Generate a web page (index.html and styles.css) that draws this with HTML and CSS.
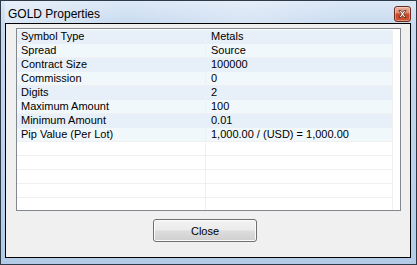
FILE: index.html
```html
<!DOCTYPE html>
<html>
<head>
<meta charset="utf-8">
<link rel="stylesheet" href="styles.css">
</head>
<body>
<div class="window">
  <div class="titlebar">
    <span class="title">GOLD Properties</span>
    <button class="xbtn" aria-label="Close">
      <svg width="9" height="8" viewBox="0 0 9 8">
        <path d="M1 0.5 L3 0.5 L4.5 2.5 L6 0.5 L8 0.5 L5.6 4 L8 7.5 L6 7.5 L4.5 5.5 L3 7.5 L1 7.5 L3.4 4 Z" fill="#fff" stroke="#5a2418" stroke-width="0.8" stroke-linejoin="round"/>
      </svg>
    </button>
  </div>
  <div class="client">
    <div class="list">
      <div class="row alt"><div class="c1">Symbol Type</div><div class="c2">Metals</div></div>
      <div class="row"><div class="c1">Spread</div><div class="c2">Source</div></div>
      <div class="row alt"><div class="c1">Contract Size</div><div class="c2">100000</div></div>
      <div class="row"><div class="c1">Commission</div><div class="c2">0</div></div>
      <div class="row alt"><div class="c1">Digits</div><div class="c2">2</div></div>
      <div class="row"><div class="c1">Maximum Amount</div><div class="c2">100</div></div>
      <div class="row alt"><div class="c1">Minimum Amount</div><div class="c2">0.01</div></div>
      <div class="row"><div class="c1">Pip Value (Per Lot)</div><div class="c2">1,000.00 / (USD) = 1,000.00</div></div>
      <div class="row empty"><div class="c1"></div><div class="c2"></div></div>
      <div class="row empty"><div class="c1"></div><div class="c2"></div></div>
      <div class="row empty"><div class="c1"></div><div class="c2"></div></div>
      <div class="row empty"><div class="c1"></div><div class="c2"></div></div>
      <div class="row empty"><div class="c1"></div><div class="c2"></div></div>
    </div>
    <div class="actions">
      <button class="btn">Close</button>
    </div>
  </div>
</div>
</body>
</html>
```
FILE: styles.css
```css
html, body {
  margin: 0;
  padding: 0;
  background: #ffffff;
}

.window {
  box-sizing: border-box;
  width: 417px;
  height: 265px;
  border: 1px solid #2f3a48;
  background: linear-gradient(180deg, #dce8f6 0%, #c6d9ef 10%, #bcd2ec 60%, #b3cbe7 100%);
  padding: 0 5px 6px 4px;
  display: flex;
  flex-direction: column;
}

.titlebar {
  height: 22px;
  display: flex;
  align-items: flex-start;
  justify-content: space-between;
  background: linear-gradient(90deg, rgba(255,255,255,0.35) 0%, rgba(255,255,255,0) 30%, rgba(255,255,255,0.25) 60%, rgba(255,255,255,0) 85%);
}

.title {
  font-family: "Liberation Sans", Arial, sans-serif;
  font-size: 12px;
  color: #000;
  padding: 7px 0 0 3px;
  line-height: 13px;
}

.xbtn {
  box-sizing: border-box;
  margin: 5px 0 0 0;
  width: 17px;
  height: 16px;
  padding: 0;
  border: 1px solid #6b2b1d;
  border-radius: 3px;
  background: linear-gradient(180deg, #eab3a4 0%, #dc8a72 40%, #c54424 55%, #cf5533 100%);
  box-shadow: inset 0 0 0 1px rgba(255,255,255,0.35);
  display: flex;
  align-items: center;
  justify-content: center;
}

.client {
  flex: 1;
  border: 1px solid #000;
  background: #f0f0f0;
  display: flex;
  flex-direction: column;
  padding: 4px 9px 0 10px;
}

.list {
  box-sizing: border-box;
  height: 183px;
  border: 1px solid #828790;
  background: #fff;
  padding-top: 1px;
  overflow: hidden;
  font-family: "Liberation Sans", Arial, sans-serif;
  font-size: 11px;
  color: #000;
}

.row {
  display: flex;
  height: 14px;
  box-sizing: border-box;
  line-height: 13px;
}

.c1 {
  box-sizing: border-box;
  width: 189px;
  padding-left: 4px;
  border-right: 1px solid #f0f0f0;
  border-bottom: 1px solid #f0f0f0;
  background: #f1f8fc;
  white-space: nowrap;
}

.c2 {
  box-sizing: border-box;
  width: 187px;
  padding-left: 5px;
  border-right: 1px solid #f0f0f0;
  border-bottom: 1px solid #f0f0f0;
  background: #f1f8fc;
  white-space: nowrap;
}

.row.alt .c1,
.row.alt .c2 {
  background: #e7eff8;
  border-bottom-color: #e7eff8;
}

.row.empty .c1,
.row.empty .c2 {
  background: #fff;
}

.actions {
  display: flex;
  padding: 8px 0 0 137px;
}

.btn {
  box-sizing: border-box;
  width: 104px;
  height: 23px;
  border: 1px solid #707070;
  border-radius: 3px;
  background: linear-gradient(180deg, #f3f3f3 0%, #ebebeb 48%, #dddddd 52%, #cfcfcf 100%);
  box-shadow: inset 0 0 0 1px #fbfbfb;
  font-family: "Liberation Sans", Arial, sans-serif;
  font-size: 11px;
  color: #000;
  padding: 0;
}
```
